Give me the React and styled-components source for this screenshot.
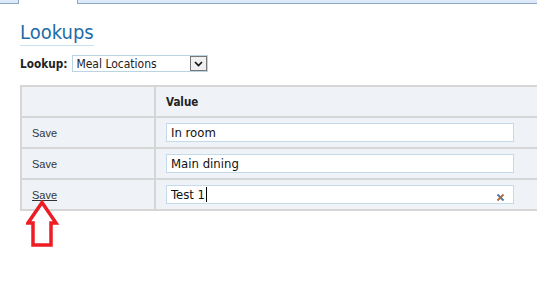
import React from "react";
import styled, { createGlobalStyle } from "styled-components";

const GlobalStyle = createGlobalStyle`
  html, body {
    margin: 0;
    padding: 0;
    background: #ffffff;
    font-family: "DejaVu Sans Condensed", "DejaVu Sans", sans-serif;
    color: #222;
  }
`;

const Page = styled.div`
  width: 537px;
  height: 286px;
  overflow: hidden;
  position: relative;
`;

const TabStrip = styled.div`
  display: flex;
  height: 4px;
`;

const TabEdge = styled.div`
  width: ${(p) => p.$width}px;
  flex: ${(p) => (p.$width ? "none" : "1")};
  background: ${(p) => (p.$active ? "#ffffff" : "#dce9f8")};
  border-bottom: ${(p) => (p.$active ? "none" : "1px solid #8fa8c6")};
  border-right: ${(p) => (p.$right ? "1px solid #8fa8c6" : "none")};
  border-left: ${(p) => (p.$left ? "1px solid #8fa8c6" : "none")};
  box-sizing: border-box;
`;

const Content = styled.div`
  padding: 16px 0 0 20px;
`;

const Title = styled.h1`
  display: inline-block;
  margin: 0;
  font-size: 20px;
  font-weight: normal;
  color: #1f6ca6;
  line-height: 24px;
  padding-bottom: 1px;
  border-bottom: 1px solid #c9e0ee;
`;

const LookupRow = styled.div`
  display: flex;
  align-items: center;
  gap: 5px;
  margin-top: 9px;
  font-size: 11.7px;
`;

const Label = styled.span`
  font-weight: bold;
`;

const Select = styled.div`
  display: flex;
  align-items: center;
  width: 136px;
  height: 17px;
  box-sizing: border-box;
  border: 1px solid #bcd3e2;
  padding-left: 3px;
  font-size: 12px;
  background: #fff;
`;

const SelectText = styled.span`
  flex: 1;
`;

const SelectButton = styled.span`
  width: 17px;
  height: 15px;
  box-sizing: border-box;
  border: 1px solid #777;
  background: #f0f0f0;
  display: flex;
  align-items: center;
  justify-content: center;
`;

const Table = styled.table`
  margin-top: 13px;
  width: 540px;
  border-collapse: collapse;
  background: #eff3f8;
  font-size: 11.5px;
`;

const Th = styled.th`
  height: 29px;
  border: 2px solid #d6d6d6;
  border-width: 2px 0 2px 2px;
  text-align: left;
  padding: 0 10px;
  font-weight: bold;
  width: ${(p) => (p.$narrow ? "112px" : "auto")};
`;

const Td = styled.td`
  height: 29px;
  border: 2px solid #d6d6d6;
  border-width: 2px 0 2px 2px;
  padding: 0 10px;
`;

const SaveLink = styled.a`
  color: #333;
  font-family: "Liberation Sans", Arial, sans-serif;
  font-size: 11px;
  text-decoration: ${(p) => (p.$hover ? "underline" : "none")};
`;

const InputBox = styled.div`
  position: relative;
  width: 348px;
  height: 19px;
  box-sizing: border-box;
  border: 1px solid #c3dbe9;
  background: #fff;
  display: flex;
  align-items: center;
  padding-left: 4px;
  font-size: 13px;
  color: #111;
`;

const Caret = styled.span`
  display: inline-block;
  width: 1px;
  height: 15px;
  background: #000;
  margin-left: 1px;
`;

const Clear = styled.span`
  position: absolute;
  right: 8px;
  top: 4px;
  width: 9px;
  height: 9px;
`;

const ArrowWrap = styled.div`
  position: relative;
  margin: -11px 0 0 6px;
  width: 34px;
  height: 50px;
`;

const rows = [
  { value: "In room" },
  { value: "Main dining" },
  { value: "Test 1", active: true },
];

export default function App() {
  return (
    <Page>
      <GlobalStyle />
      <TabStrip>
        <TabEdge $width={19} $right />
        <TabEdge $width={58} $active />
        <TabEdge $left />
      </TabStrip>
      <Content>
        <Title>Lookups</Title>
        <LookupRow>
          <Label>Lookup:</Label>
          <Select>
            <SelectText>Meal Locations</SelectText>
            <SelectButton>
              <svg width="9" height="6" viewBox="0 0 9 6">
                <path d="M1 1 L4.5 4.5 L8 1" fill="none" stroke="#111" strokeWidth="1.6" />
              </svg>
            </SelectButton>
          </Select>
        </LookupRow>
        <Table>
          <thead>
            <tr>
              <Th $narrow></Th>
              <Th>Value</Th>
            </tr>
          </thead>
          <tbody>
            {rows.map((r) => (
              <tr key={r.value}>
                <Td>
                  <SaveLink href="#" $hover={r.active}>Save</SaveLink>
                </Td>
                <Td>
                  <InputBox>
                    {r.value}
                    {r.active && <Caret />}
                    {r.active && (
                      <Clear>
                        <svg width="9" height="9" viewBox="0 0 9 9">
                          <path d="M1.5 1.5 L7.5 7.5" stroke="#3a78b8" strokeWidth="1.8" />
                          <path d="M7.5 1.5 L1.5 7.5" stroke="#b06a3a" strokeWidth="1.8" />
                        </svg>
                      </Clear>
                    )}
                  </InputBox>
                </Td>
              </tr>
            ))}
          </tbody>
        </Table>
        <ArrowWrap>
          <svg width="34" height="50" viewBox="0 0 34 50">
            <path
              d="M16 2.5 L30 23 L25 23 L25 45 L7 45 L7 23 L2 23 Z"
              fill="#fff"
              stroke="#ee1c25"
              strokeWidth="3.5"
              strokeLinejoin="miter"
            />
          </svg>
        </ArrowWrap>
      </Content>
    </Page>
  );
}
